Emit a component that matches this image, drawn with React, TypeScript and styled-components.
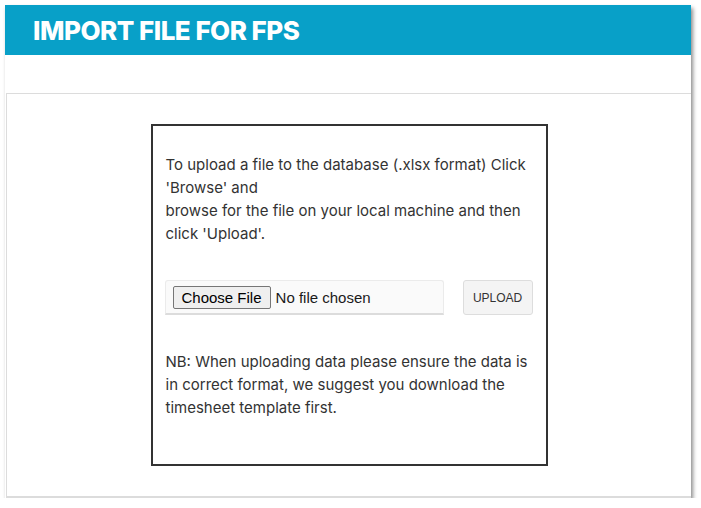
import React from 'react'
import styled, { createGlobalStyle } from 'styled-components'

const GlobalStyle = createGlobalStyle`
  body {
    margin: 0;
    background: #ffffff;
    font-family: Inter, 'Noto Sans', sans-serif;
  }
`

const Frame = styled.div`
  margin: 5px 0 0 5px;
  width: 686px;
  height: 493px;
  background: #ffffff;
  box-shadow: 2px 3px 4px rgba(0, 0, 0, 0.45);
  display: flex;
  flex-direction: column;
`

const Header = styled.div`
  height: 51px;
  background: #08a0c8;
  display: flex;
  align-items: center;
  padding-left: 28px;
`

const Title = styled.h1`
  margin: 0;
  color: #ffffff;
  font-family: Inter, sans-serif;
  font-weight: 800;
  font-size: 26px;
  letter-spacing: -0.5px;
`

const Panel = styled.div`
  margin-top: 38px;
  margin-left: 1px;
  flex: 1;
  border: 1px solid #dcdcdc;
  border-right: none;
  border-bottom-width: 2px;
  padding: 30px 0;
  display: flex;
  justify-content: center;
`

const Card = styled.div`
  width: 367px;
  height: 311px;
  border: 2px solid #333333;
  padding: 27px 13px 0 13px;
`

const Text = styled.p`
  margin: 0;
  font-size: 15px;
  line-height: 23px;
  color: #333333;
`

const UploadRow = styled.div`
  display: flex;
  align-items: flex-start;
  gap: 19px;
  margin: 35px 0 35px -1px;
`

const FileField = styled.label`
  width: 280px;
  height: 35px;
  box-sizing: border-box;
  background: #fafafa;
  border: 1px solid #ebebeb;
  border-bottom: 2px solid #dcdcdc;
  border-radius: 3px 3px 0 0;
  display: flex;
  align-items: center;
  padding-left: 7px;
  font-family: 'Liberation Sans', Arial, sans-serif;
  font-size: 15px;
  color: #1a1a1a;
  cursor: pointer;

  input {
    display: none;
  }
`

const ChooseButton = styled.span`
  display: inline-flex;
  align-items: center;
  height: 23px;
  padding: 0 8px;
  margin-right: 5px;
  background: #efefef;
  border: 1px solid #767676;
  border-radius: 2px;
  box-sizing: border-box;
  color: #000000;
`

const UploadButton = styled.button`
  width: 70px;
  height: 35px;
  background: #f4f4f4;
  border: 1px solid #dddddd;
  border-radius: 3px;
  font-family: 'Liberation Sans', Arial, sans-serif;
  font-size: 12px;
  color: #333333;
  padding: 0;
`

export default function App() {
  return (
    <>
      <GlobalStyle />
      <Frame>
        <Header>
          <Title>IMPORT FILE FOR FPS</Title>
        </Header>
        <Panel>
          <Card>
            <Text>
              To upload a file to the database (.xlsx format) Click 'Browse' and
              <br />
              browse for the file on your local machine and then click 'Upload'.
            </Text>
            <UploadRow>
              <FileField>
                <input type="file" accept=".xlsx" />
                <ChooseButton>Choose File</ChooseButton>
                No file chosen
              </FileField>
              <UploadButton>UPLOAD</UploadButton>
            </UploadRow>
            <Text>
              NB: When uploading data please ensure the data is in correct format, we
              suggest you download the timesheet template first.
            </Text>
          </Card>
        </Panel>
      </Frame>
    </>
  )
}
